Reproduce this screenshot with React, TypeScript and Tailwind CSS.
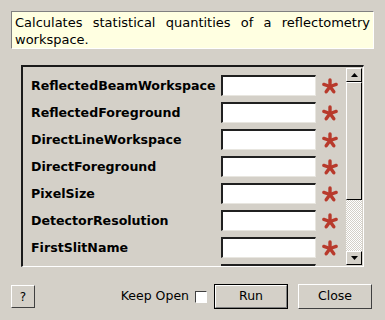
import React from "react";

const fields = [
  "ReflectedBeamWorkspace",
  "ReflectedForeground",
  "DirectLineWorkspace",
  "DirectForeground",
  "PixelSize",
  "DetectorResolution",
  "FirstSlitName",
  "",
];

function Star() {
  const arms = [-90, -18, 54, 126, 198];
  return (
    <svg width="18" height="18" viewBox="0 0 18 18">
      {arms.map((a) => {
        const r = (a * Math.PI) / 180;
        return (
          <line
            key={a}
            x1="9"
            y1="9.5"
            x2={9 + Math.cos(r) * 6.5}
            y2={9.5 + Math.sin(r) * 6.5}
            stroke="#b83a2c"
            strokeWidth="3.4"
            strokeLinecap="round"
          />
        );
      })}
    </svg>
  );
}

function Arrow({ down }: { down?: boolean }) {
  return (
    <svg width="7" height="4" viewBox="0 0 7 4">
      <polygon points={down ? "0,0 7,0 3.5,4" : "0,4 7,4 3.5,0"} fill="#000" />
    </svg>
  );
}

export default function App() {
  return (
    <div
      className="w-[385px] h-[320px] bg-[#d4d0c8] overflow-hidden text-black"
      style={{ fontFamily: '"DejaVu Sans", Verdana, sans-serif' }}
    >
      <div className="pt-[11px] px-[11px]">
        <div className="h-[38px] bg-[#ffffe1] border-t border-l border-[#808080] border-r-[#ffffff] border-b-[#ffffff] border-r border-b px-[3px] pt-[2px] text-[13px] leading-[17px] text-justify [text-align-last:left]">
          Calculates statistical quantities of a reflectometry workspace.
        </div>
      </div>

      <div className="ml-[21px] mt-[16px] w-[343px] h-[202px] border-t-2 border-l-2 border-[#1a1a1a] border-r border-b border-r-white border-b-white flex">
        <div className="flex-1 overflow-hidden pt-[8px] pl-[8px]">
          <div className="flex flex-col gap-[6px]">
            {fields.map((f, i) => (
              <div key={i} className="flex items-center h-[21px]">
                <div className="w-[190px] font-bold text-[12.6px] leading-[16px] whitespace-nowrap">{f}</div>
                <div className="w-[95px] h-[21px] bg-white border-t-2 border-l-2 border-[#202020] border-r border-b border-r-[#e8e6e0] border-b-[#e8e6e0]" />
                <div className="ml-[5px] mt-[1px]">
                  <Star />
                </div>
              </div>
            ))}
          </div>
        </div>
        <div className="w-[16px] my-[1px] mr-[1px] flex flex-col">
          <div className="h-[14px] bg-[#d4d0c8] border-t border-l border-white border-r border-b border-r-black border-b-black flex items-center justify-center">
            <Arrow />
          </div>
          <div className="h-[118px] bg-[#d4d0c8] border-t border-l border-white border-r border-b border-r-black border-b-black" />
          <div
            className="flex-1"
            style={{
              backgroundColor: "#d4d0c8",
              backgroundImage:
                "repeating-conic-gradient(#ffffff 0% 25%, #d4d0c8 0% 50%)",
              backgroundSize: "2px 2px",
            }}
          />
          <div className="h-[14px] bg-[#d4d0c8] border-t border-l border-white border-r border-b border-r-black border-b-black flex items-center justify-center">
            <Arrow down />
          </div>
        </div>
      </div>

      <div className="flex items-center mt-[17px] pl-[11px] pr-[13px] text-[12.5px]">
        <button className="w-[24px] h-[23px] bg-[#d4d0c8] border-t border-l border-white border-r border-b border-r-[#404040] border-b-[#404040] text-[12px] flex items-center justify-center">
          ?
        </button>
        <div className="flex-1" />
        <span className="mr-[6px]">Keep Open</span>
        <div className="w-[12px] h-[12px] bg-white border-t border-l border-[#404040] border-r border-b border-r-white border-b-white" />
        <button className="ml-[7px] w-[74px] h-[25px] bg-[#d4d0c8] border border-black flex items-center justify-center">
          <div className="w-full h-full border-t border-l border-white border-r border-b border-r-[#808080] border-b-[#808080] flex items-center justify-center">
            Run
          </div>
        </button>
        <button className="ml-[10px] w-[74px] h-[25px] bg-[#d4d0c8] border-t border-l border-white border-r border-b border-r-[#404040] border-b-[#404040] flex items-center justify-center">
          Close
        </button>
      </div>
    </div>
  );
}
